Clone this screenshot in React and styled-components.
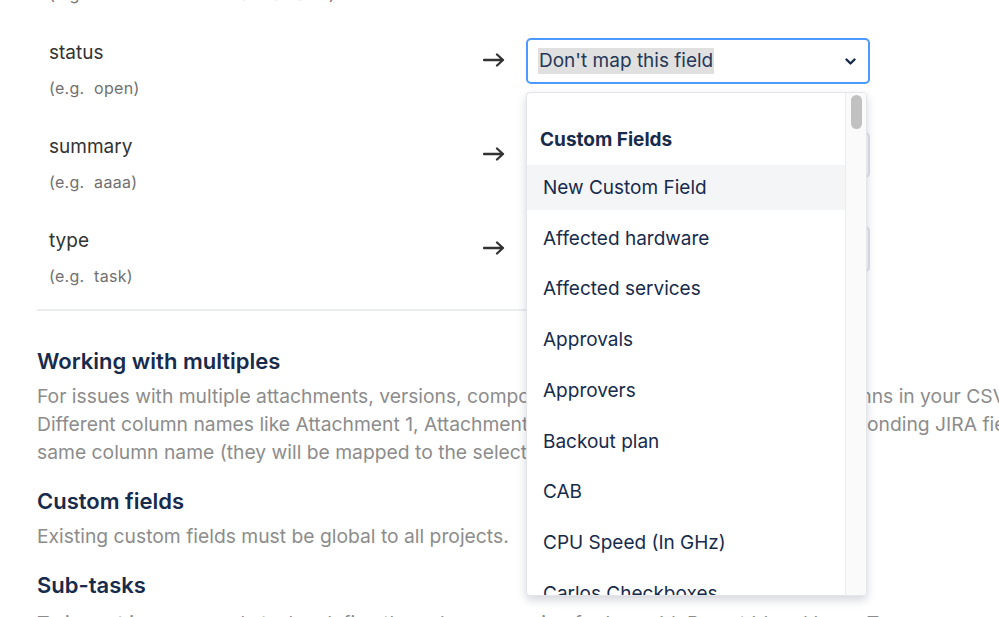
import React from "react";
import styled, { createGlobalStyle } from "styled-components";

const GlobalStyle = createGlobalStyle`
  html, body {
    margin: 0;
    padding: 0;
    background: #fff;
    overflow: hidden;
  }
  body {
    font-family: Inter, "Noto Sans", "Liberation Sans", sans-serif;
    -webkit-font-smoothing: antialiased;
  }
`;

const Page = styled.div`
  width: 1300px;
  margin-top: -56px;
  padding-left: 37px;
`;

const Rows = styled.div`
  display: flex;
  flex-direction: column;
  gap: 11px;
  padding-left: 12px;
`;

const Row = styled.div`
  display: flex;
  align-items: flex-start;
  height: 83px;
`;

const FieldInfo = styled.div`
  width: 434px;
  padding-top: 3px;
`;

const FieldName = styled.div`
  font-size: 19px;
  line-height: 24px;
  color: #333;
`;

const FieldHint = styled.div`
  margin-top: 13px;
  font-size: 16px;
  line-height: 20px;
  color: #707070;
  letter-spacing: 0.3px;
  white-space: pre;
`;

const ArrowCell = styled.div`
  width: 22px;
  height: 44px;
  display: flex;
  align-items: center;
  justify-content: center;
  color: #333;
`;

const SelectWrap = styled.div`
  position: relative;
  margin-left: 21px;
  width: 344px;
`;

const SelectBox = styled.div`
  box-sizing: border-box;
  height: 46px;
  display: flex;
  align-items: center;
  justify-content: space-between;
  padding: 0 12px 0 10px;
  border: 2px solid ${(p) => (p.$focused ? "#4C9AFF" : "#DFE1E6")};
  border-radius: 5px;
  background: ${(p) => (p.$focused ? "#fff" : "#FAFBFC")};
  font-size: 19px;
  color: #253858;
`;

const Selected = styled.span`
  background: #e0e0e0;
  line-height: 26px;
  padding: 0 1px;
`;

const Menu = styled.div`
  position: absolute;
  z-index: 10;
  top: calc(100% + 8px);
  left: 0;
  box-sizing: border-box;
  width: 341px;
  height: 504px;
  display: flex;
  background: #fff;
  border: 1px solid #e4e5e8;
  border-radius: 4px;
  box-shadow: 0 4px 10px rgba(9, 30, 66, 0.18);
  overflow: hidden;
`;

const List = styled.div`
  flex: 1;
  display: flex;
  flex-direction: column;
  gap: 5.75px;
  padding-top: 35px;
  overflow: hidden;
`;

const GroupTitle = styled.div`
  padding-left: 13px;
  margin-bottom: 7px;
  font-size: 19px;
  line-height: 24px;
  font-weight: 700;
  color: #172b4d;
`;

const Option = styled.div`
  flex: none;
  height: 45px;
  display: flex;
  align-items: center;
  padding-left: 16px;
  font-size: 19px;
  color: #172b4d;
  background: ${(p) => (p.$active ? "#F4F5F7" : "transparent")};
`;

const ScrollTrack = styled.div`
  width: 20px;
  flex: none;
  background: #fafafa;
  border-left: 1px solid #ebebeb;
  padding-top: 2px;
  display: flex;
  justify-content: center;
`;

const ScrollThumb = styled.div`
  width: 11px;
  height: 34px;
  border-radius: 6px;
  background: #c1c1c1;
`;

const Divider = styled.div`
  width: 830px;
  height: 2px;
  background: #ebecf0;
`;

const Section = styled.section`
  margin-top: ${(p) => (p.$first ? "35px" : "20px")};
`;

const Heading = styled.h3`
  margin: 0 0 ${(p) => (p.$tight ? "9px" : "6px")};
  font-size: 22px;
  line-height: 30px;
  font-weight: 600;
  color: #172b4d;
`;

const Text = styled.p`
  margin: 0;
  font-size: 19.3px;
  line-height: 28px;
  color: #8c8c8c;
  white-space: nowrap;
`;

const ArrowIcon = () => (
  <svg width="22" height="14" viewBox="0 0 22 14" fill="none">
    <path
      d="M1 7h19M14 1.5L20 7l-6 5.5"
      stroke="currentColor"
      strokeWidth="2.3"
      strokeLinecap="round"
      strokeLinejoin="round"
    />
  </svg>
);

const Chevron = () => (
  <svg width="11" height="7" viewBox="0 0 11 7" fill="none">
    <path
      d="M1.5 1.5l4 4 4-4"
      stroke="#172B4D"
      strokeWidth="2.4"
      strokeLinecap="round"
      strokeLinejoin="round"
    />
  </svg>
);

const fields = [
  { name: "first", hint: "(e.g.  First row doesn't have a value)" },
  { name: "status", hint: "(e.g.  open)", open: true },
  { name: "summary", hint: "(e.g.  aaaa)" },
  { name: "type", hint: "(e.g.  task)" },
];

const options = [
  "New Custom Field",
  "Affected hardware",
  "Affected services",
  "Approvals",
  "Approvers",
  "Backout plan",
  "CAB",
  "CPU Speed (In GHz)",
  "Carlos Checkboxes",
  "Change reason",
];

function FieldSelect({ open }) {
  return (
    <SelectWrap>
      <SelectBox $focused={open}>
        {open ? <Selected>Don't map this field</Selected> : <span>Don't map this field</span>}
        <Chevron />
      </SelectBox>
      {open && (
        <Menu>
          <List>
            <GroupTitle>Custom Fields</GroupTitle>
            {options.map((o, i) => (
              <Option key={o} $active={i === 0}>
                {o}
              </Option>
            ))}
          </List>
          <ScrollTrack>
            <ScrollThumb />
          </ScrollTrack>
        </Menu>
      )}
    </SelectWrap>
  );
}

export default function App() {
  return (
    <>
      <GlobalStyle />
      <Page>
        <Rows>
          {fields.map((f) => (
            <Row key={f.name}>
              <FieldInfo>
                <FieldName>{f.name}</FieldName>
                <FieldHint>{f.hint}</FieldHint>
              </FieldInfo>
              <ArrowCell>
                <ArrowIcon />
              </ArrowCell>
              <FieldSelect open={f.open} />
            </Row>
          ))}
        </Rows>
        <Divider />

        <Section $first>
          <Heading>Working with multiples</Heading>
          <Text>
            For issues with multiple attachments, versions, components, labels, etc., use multiple columns in your CSV file.
            <br />
            Different column names like Attachment 1, Attachment 2, etc. will be mapped to the corresponding JIRA field, or use the
            <br />
            same column name (they will be mapped to the selected field).
          </Text>
        </Section>

        <Section>
          <Heading>Custom fields</Heading>
          <Text>Existing custom fields must be global to all projects.</Text>
        </Section>

        <Section>
          <Heading $tight>Sub-tasks</Heading>
          <Text>To import issues as sub-tasks, define the column mapping for Issue Id, Parent Id and Issue Type.</Text>
        </Section>
      </Page>
    </>
  );
}
